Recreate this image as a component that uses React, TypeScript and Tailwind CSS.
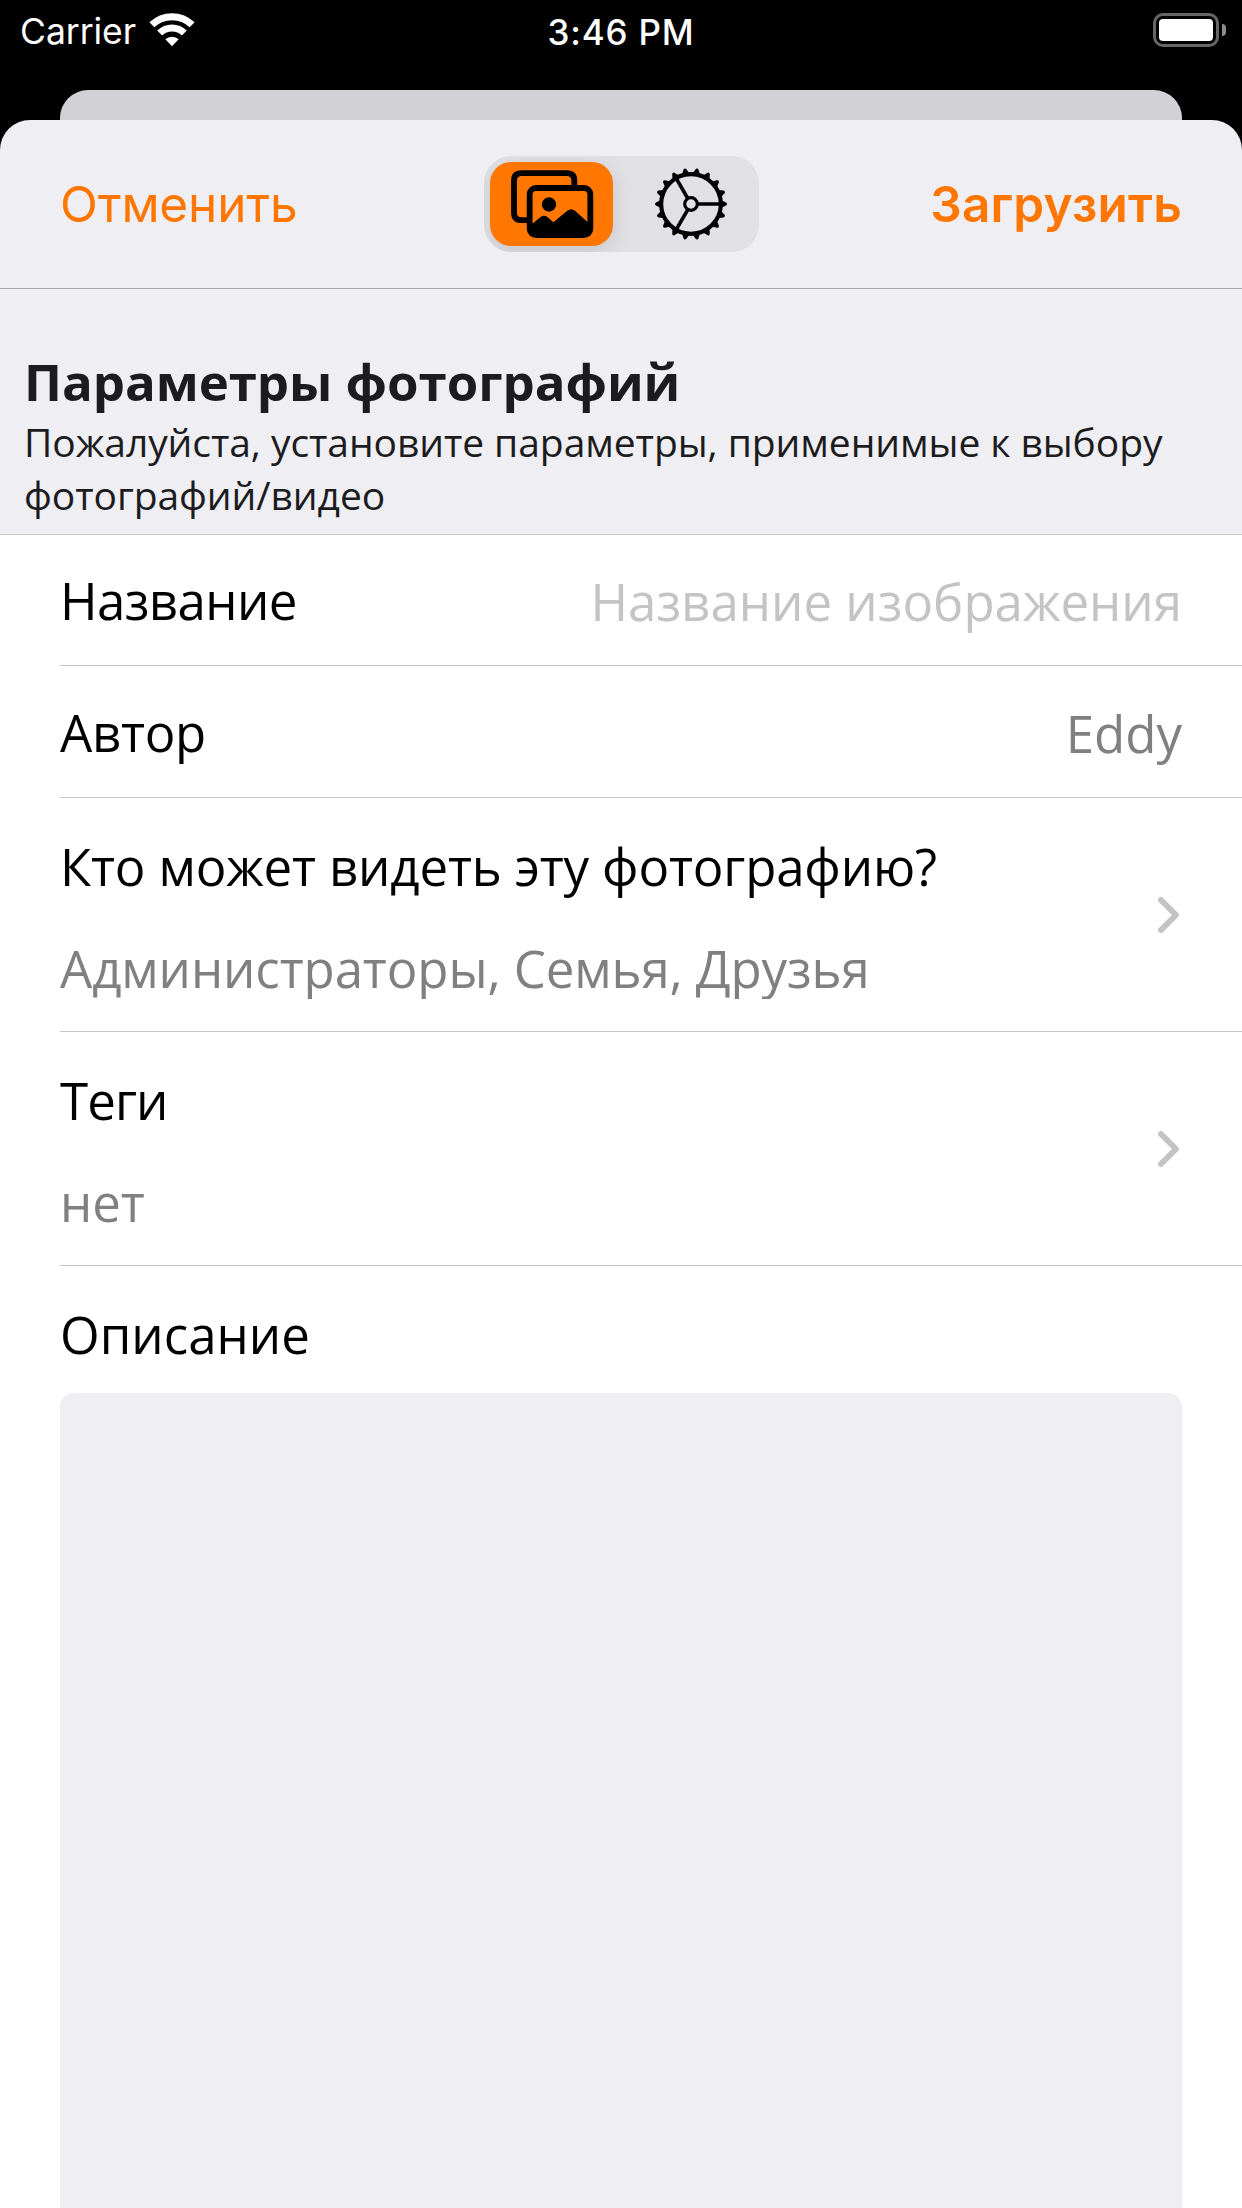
import type { ReactNode } from "react";

function WifiIcon() {
  return (
    <svg className="ml-[13px] mt-[13px] h-[34px] w-[46px]" viewBox="447 38 138 102" fill="none">
      <g stroke="#fff" strokeWidth="21">
        <path d="M455.5 73.5A87 87 0 0 1 576.5 73.5" />
        <path d="M479 98A53 53 0 0 1 553 98" />
      </g>
      <path d="M496 117A29 29 0 0 1 536 117L516 138Z" fill="#fff" />
    </svg>
  );
}

function PhotosIcon() {
  return (
    <svg className="h-[84px] w-[123px]" viewBox="60 66 369 252" fill="none" stroke="#000" strokeWidth="17.5">
      <path d="M313 137V122Q313 99.5 290 99.5H155Q132 99.5 132 122V218Q132 240.500 155 240.500H172" />
      <rect x="179" y="144" width="182" height="141.500" rx="19" />
      <circle cx="237" cy="193.500" r="21.500" fill="#000" stroke="none" />
      <path
        d="M186 252L212 231Q222 224 232 231L250 247L292 212Q303 203 315 212L355 248V286H186Z"
        fill="#000"
        stroke="none"
      />
    </svg>
  );
}

const teeth = Array.from({ length: 18 }, (_, i) => i * 20);

function GearIcon() {
  return (
    <svg className="h-[72px] w-[72px]" viewBox="-108 -108 216 216" fill="none" stroke="#000">
      <circle r="89.500" strokeWidth="12.500" />
      <circle r="19" strokeWidth="9.500" />
      {[0, 120, 240].map((a) => (
        <path key={a} d="M21 0H88" strokeWidth="11" transform={`rotate(${a})`} />
      ))}
      {teeth.map((a) => (
        <path
          key={a}
          d="M92 -11L105 -4.500Q108 -3 108 0Q108 3 105 4.500L92 11Z"
          fill="#000"
          stroke="none"
          transform={`rotate(${a})`}
        />
      ))}
    </svg>
  );
}

function Chevron() {
  return (
    <svg
      className="mr-[63px] h-9 w-[21px]"
      viewBox="0 0 21 36"
      fill="none"
      stroke="#c4c4c6"
      strokeWidth="6"
      strokeLinecap="round"
      strokeLinejoin="round"
    >
      <path d="M3 3L18 18L3 33" />
    </svg>
  );
}

function StatusBar() {
  return (
    <div className="grid h-[90px] grid-cols-3 font-['Inter'] text-[35px] leading-[42px] text-white">
      <div className="flex pl-5">
        <span className="pt-[11px] text-[35.500px] tracking-[-0.05px]">Carrier</span>
        <WifiIcon />
      </div>
      <div className="pt-[11px] text-center font-medium tracking-[0.8px]">3:46 PM</div>
      <div className="flex justify-end pr-4 pt-[13px]">
        <div className="h-[34px] w-[66px] rounded-[10px] border-[3px] border-[#666666] p-[3px]">
          <div className="h-[22px] w-[54px] rounded-[4px] bg-white" />
        </div>
        <div className="ml-[3px] mt-[11px] h-3 w-1 rounded-r-full bg-[#8c8c8c]" />
      </div>
    </div>
  );
}

function NavBar() {
  return (
    <div className="flex h-[169px] items-start justify-between border-b border-[#a7a6aa] px-[60px] pt-9 font-['Inter'] text-[49.500px] leading-[60px] text-[#ff7700]">
      <button className="mt-[18px] w-[300px] text-left tracking-[-0.15px]">Отменить</button>
      <div className="flex h-24 w-[275px] overflow-hidden rounded-[27px] bg-[#e1e0e5] p-[6px]">
        <div className="h-[84px] w-[123px] rounded-[21px] bg-[#ff7700] shadow-[0_6px_20px_rgba(0,0,0,0.12)]">
          <PhotosIcon />
        </div>
        <div className="ml-[42px] mt-[6px]">
          <GearIcon />
        </div>
      </div>
      <button className="mt-[18px] w-[300px] text-right font-semibold tracking-[0.2px]">Загрузить</button>
    </div>
  );
}

function FieldRow({ label, children, className }: { label: ReactNode; children: ReactNode; className: string }) {
  return (
    <div className={`ml-[60px] flex items-start justify-between border-b border-[#c6c6c8] pr-[60px] ${className}`}>
      {label}
      {children}
    </div>
  );
}

function LinkRow({ label, value }: { label: ReactNode; value: string }) {
  return (
    <div className="ml-[60px] flex h-[234px] items-center justify-between border-b border-[#c6c6c8]">
      <div className="flex h-full flex-col gap-[33px] pt-[34px]">
        {label}
        <span className="h-[65px] overflow-hidden tracking-[-0.12px] text-[#808080]">{value}</span>
      </div>
      <Chevron />
    </div>
  );
}

export default function App() {
  return (
    <div className="flex h-[2208px] w-[1242px] flex-col overflow-hidden bg-black font-['Open_Sans',sans-serif]">
      <StatusBar />
      <div className="mx-[60px] h-[30px] shrink-0 rounded-t-[28px] bg-[#d2d1d6]" />
      <div className="flex flex-1 flex-col overflow-hidden rounded-t-[30px] bg-[#efeef3]">
        <NavBar />
        <header className="h-[246px] border-b border-[#c6c6c8] pl-6 pt-[58px] text-[#1c1c1e]">
          <h1 className="text-[51px] font-bold leading-[69px] tracking-[-0.06px]">Параметры фотографий</h1>
          <p className="-mt-px text-[39px] leading-[53px] tracking-[-0.07px]">
            Пожалуйста, установите параметры, применимые к выбору
            <br />
            фотографий/видео
          </p>
        </header>
        <main className="flex flex-1 flex-col bg-white text-[51px] leading-[69px] text-black">
          <FieldRow label={<span className="tracking-[-0.6px]">Название</span>} className="h-[131px] pt-[31px]">
            <span className="pt-px text-[#c4c4c4]">Название изображения</span>
          </FieldRow>
          <FieldRow label={<span className="tracking-[-0.3px]">Автор</span>} className="h-[132px] pt-8">
            <span className="pt-px text-[#808080]">Eddy</span>
          </FieldRow>
          <LinkRow
            label={<span className="tracking-[-0.16px]">Кто может видеть эту фотографию?</span>}
            value="Администраторы, Семья, Друзья"
          />
          <LinkRow label={<span className="tracking-[-0.9px]">Теги</span>} value="нет" />
          <div className="mt-[34px] px-[60px]">Описание</div>
          <div className="mx-[60px] mt-[24px] flex-1 rounded-t-[14px] bg-[#efeef3]" />
        </main>
      </div>
    </div>
  );
}
